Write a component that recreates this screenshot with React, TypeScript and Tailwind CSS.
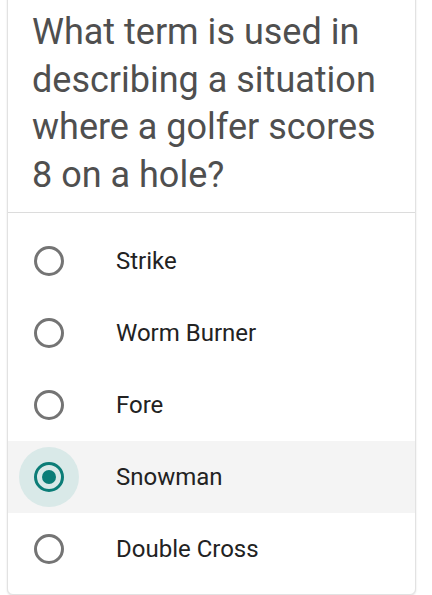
import { useState } from "react";

const options = ["Strike", "Worm Burner", "Fore", "Snowman", "Double Cross"];

function Radio({ checked }: { checked: boolean }) {
  return (
    <div
      className={`flex h-[60px] w-[60px] items-center justify-center rounded-full ${
        checked ? "bg-[#d9e9e8]" : ""
      }`}
    >
      <div
        className={`flex h-[30px] w-[30px] items-center justify-center rounded-full border-[3px] ${
          checked ? "border-[#0b7d77]" : "border-[#747474]"
        }`}
      >
        {checked && <div className="h-[14px] w-[14px] rounded-full bg-[#0b7d77]" />}
      </div>
    </div>
  );
}

export default function App() {
  const [selected, setSelected] = useState(3);

  return (
    <div className="h-[595px] w-[432px] overflow-hidden bg-white font-['Roboto',sans-serif]">
      <div className="-mt-[20px] ml-[7px] w-[409px] rounded-b-[6px] border border-[#e2e2e2] bg-white shadow-[0_1px_2px_rgba(0,0,0,0.12)]">
        <div className="px-[24px] pt-[28px] pb-[13px] text-[36px] leading-[47.5px] text-[#4f4f4f]">
          What term is used in describing a situation where a golfer scores 8 on a hole?
        </div>
        <div className="h-px bg-[#dcdcdc]" />
        <ul className="pt-[12px] pb-[9px]">
          {options.map((opt, i) => (
            <li
              key={opt}
              onClick={() => setSelected(i)}
              className={`flex h-[72px] cursor-pointer items-center pl-[11px] ${
                selected === i ? "bg-[#f4f4f4]" : ""
              }`}
            >
              <Radio checked={selected === i} />
              <span className="ml-[37px] text-[24px] text-[#222222]">{opt}</span>
            </li>
          ))}
        </ul>
      </div>
    </div>
  );
}
